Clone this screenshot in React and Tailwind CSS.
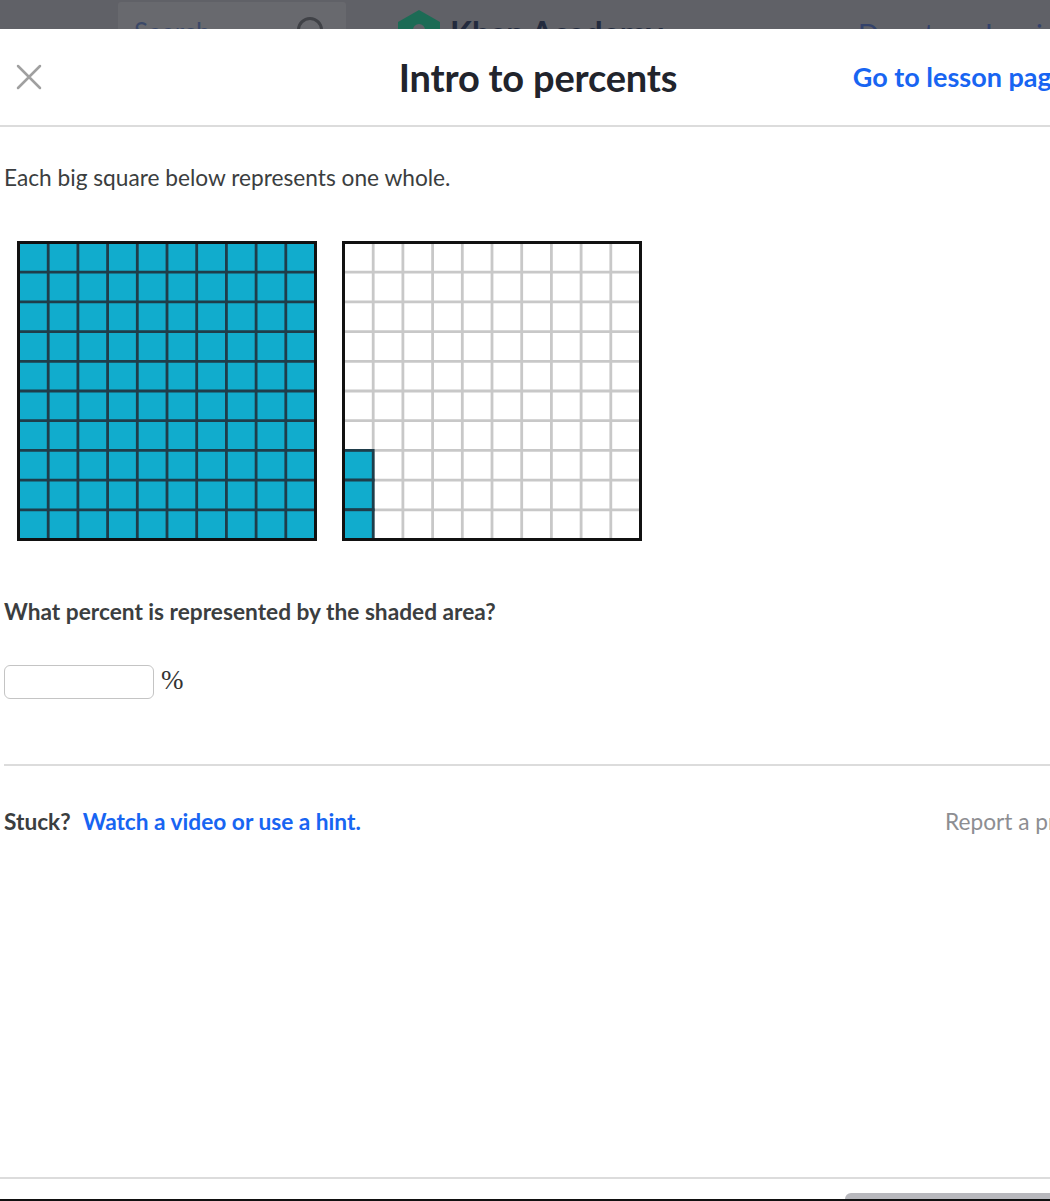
import React from 'react';

const BLUE = '#11accd';
const DARK_LINE = '#1f3d4a';
const cells = Array.from({ length: 9 }, (_, i) => (i + 1) * 29.7 + 1.5);

const FullGrid = () => (
  <svg width="300" height="300" viewBox="0 0 300 300">
    <rect x="1.5" y="1.5" width="297" height="297" fill={BLUE} />
    {cells.map((p) => (
      <g key={p}>
        <line x1={p} y1="1.5" x2={p} y2="298.5" stroke={DARK_LINE} strokeWidth="2.8" />
        <line x1="1.5" y1={p} x2="298.5" y2={p} stroke={DARK_LINE} strokeWidth="2.8" />
      </g>
    ))}
    <rect x="1.5" y="1.5" width="297" height="297" fill="none" stroke="#111" strokeWidth="3" />
  </svg>
);

const PartGrid = () => (
  <svg width="300" height="300" viewBox="0 0 300 300">
    <rect x="1.5" y="1.5" width="297" height="297" fill="#fff" />
    {cells.map((p) => (
      <g key={p}>
        <line x1={p} y1="1.5" x2={p} y2="298.5" stroke="#c8c8c8" strokeWidth="2.8" />
        <line x1="1.5" y1={p} x2="298.5" y2={p} stroke="#c8c8c8" strokeWidth="2.8" />
      </g>
    ))}
    {[7, 8, 9].map((r) => (
      <rect
        key={r}
        x="1.5"
        y={r * 29.7 + 1.5}
        width="29.7"
        height="29.7"
        fill={BLUE}
        stroke={DARK_LINE}
        strokeWidth="2.8"
      />
    ))}
    <rect x="1.5" y="1.5" width="297" height="297" fill="none" stroke="#111" strokeWidth="3" />
  </svg>
);

const App = () => {
  return (
    <div className="w-[1050px] h-[1201px] overflow-hidden bg-white relative font-['Lato','Noto_Sans',sans-serif]">
      {/* dimmed site header behind the modal */}
      <div className="h-[29px] bg-[#606167] overflow-hidden relative">
        <div className="absolute left-[118px] top-[2px] w-[228px] h-[40px] bg-[#68696e] rounded-[3px]" />
        <div className="absolute left-[134px] top-[19px] text-[26px] text-[#3b4867] leading-none">Search</div>
        <div className="absolute left-[297px] top-[17px] w-[26px] h-[26px] rounded-full border-[3px] border-[#404247]" />
        <svg className="absolute left-[398px] top-[10px]" width="42" height="46" viewBox="0 0 42 46">
          <path d="M21 0 L42 12 L42 34 L21 46 L0 34 L0 12 Z" fill="#1c6b55" />
          <circle cx="21" cy="20" r="6" fill="#606167" />
        </svg>
        <div className="absolute left-[450px] top-[17px] text-[32px] font-bold text-[#232b3e] leading-none">Khan Academy</div>
        <div className="absolute left-[858px] top-[20px] flex gap-[36px] text-[28px] text-[#34426a] leading-none whitespace-nowrap">
          <span>Donate</span>
          <span>Log in</span>
        </div>
      </div>

      {/* modal */}
      <div className="w-[1076px] bg-white">
        <div className="h-[98px] flex items-center justify-between border-b-2 border-[#dcdcdc] relative">
          <button className="w-[58px] h-full flex items-center justify-center text-[#a0a0a0]">
            <svg width="26" height="26" viewBox="0 0 26 26">
              <path d="M2 2 L24 24 M24 2 L2 24" stroke="currentColor" strokeWidth="2.5" strokeLinecap="round" />
            </svg>
          </button>
          <h1 className="absolute left-0 right-0 text-center text-[38px] font-bold text-[#21242c] pointer-events-none tracking-[-0.2px]">
            Intro to percents
          </h1>
          <a className="pr-[10px] text-[27px] font-bold text-[#1865f2] whitespace-nowrap">Go to lesson page</a>
        </div>

        <div className="pl-[4px]">
          <p className="mt-[37px] text-[22.7px] text-[#3b3e40] leading-[28px]">
            Each big square below represents one whole.
          </p>

          <div className="mt-[49px] ml-[13px] flex gap-[25px]">
            <FullGrid />
            <PartGrid />
          </div>

          <p className="mt-[57px] text-[22.7px] font-bold text-[#3b3e40] leading-[28px]">
            What percent is represented by the shaded area?
          </p>

          <div className="mt-[39px] flex items-center gap-[7px]">
            <input
              type="text"
              className="w-[150px] h-[34px] border border-[#c4c4c4] rounded-[6px] outline-none"
            />
            <span className="text-[27px] text-[#333] font-['Liberation_Serif',serif] leading-none -mt-[4px]">%</span>
          </div>

          <div className="mt-[65px] border-t-2 border-[#dcdcdc]" />

          <div className="mt-[42px] flex items-center text-[22.7px] leading-[28px]">
            <div className="w-[941px] shrink-0">
              <span className="font-bold text-[#3b3e40]">Stuck?</span>
              <a className="ml-[12px] font-bold text-[#1865f2]">Watch a video or use a hint.</a>
            </div>
            <a className="text-[#8d8e92] whitespace-nowrap">Report a problem</a>
          </div>
        </div>
      </div>

      {/* bottom footer edge */}
      <div className="absolute left-0 right-0 top-[1177px] border-t-2 border-[#dcdcdc]" />
      <div className="absolute left-[845px] top-[1193px] w-[220px] h-[12px] bg-[#b8b8bd] rounded-tl-[6px]" />
      <div className="absolute left-0 right-0 bottom-0 h-[2px] bg-[#111]" />
    </div>
  );
};

export default App;
